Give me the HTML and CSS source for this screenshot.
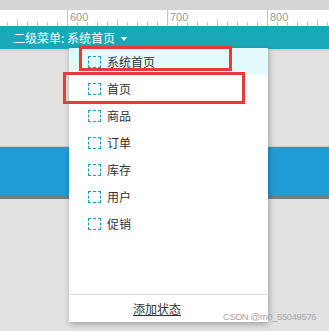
FILE: index.html
```html
<!DOCTYPE html>
<html lang="zh-CN">
<head>
<meta charset="UTF-8">
<meta name="viewport" content="width=device-width, initial-scale=1.0">
<title>二级菜单</title>
<link rel="stylesheet" href="styles.css">
</head>
<body>
    <div class="top-strip"></div>
    <div class="ruler">
        <span class="ruler-cell">600</span>
        <span class="ruler-cell">700</span>
        <span class="ruler-cell">800</span>
    </div>
    <div class="menu-bar">
        <span>二级菜单:&nbsp;系统首页</span>
        <span class="caret"></span>
    </div>
    <div class="canvas">
        <div class="canvas-gap"></div>
        <div class="blue-band"></div>
    </div>

    <div class="dropdown">
        <ul class="state-list">
            <li class="state-item active"><span class="check"></span>系统首页</li>
            <li class="state-item"><span class="check"></span>首页</li>
            <li class="state-item"><span class="check"></span>商品</li>
            <li class="state-item"><span class="check"></span>订单</li>
            <li class="state-item"><span class="check"></span>库存</li>
            <li class="state-item"><span class="check"></span>用户</li>
            <li class="state-item"><span class="check"></span>促销</li>
        </ul>
        <div class="dropdown-footer"><a class="add-state">添加状态</a></div>
    </div>

    <!-- annotation boxes -->
    <div class="mark mark-one"></div>
    <div class="mark mark-two"></div>

    <div class="watermark">CSDN @m0_55049576</div>
</body>
</html>
```

FILE: styles.css
```css
body {
    margin: 0;
    width: 329px;
    height: 331px;
    overflow: hidden;
    background-color: #e2e2e2;
    font-family: "Noto Sans CJK SC", "Liberation Sans", sans-serif;
    position: relative;
}

.top-strip {
    height: 10px;
    background-color: #d5d5d5;
}

.ruler {
    height: 16px;
    background-color: #fff;
    display: flex;
    padding-left: 67px;
    overflow: hidden;
    background-image:
        linear-gradient(to right, #c4c4c4 1px, transparent 1px),
        linear-gradient(to right, #c4c4c4 1px, transparent 1px);
    background-size: 10px 4px, 50px 7px;
    background-position: 7px 100%, 17px 100%;
    background-repeat: repeat-x;
}

.ruler-cell {
    flex: 0 0 100px;
    box-sizing: border-box;
    border-left: 1px solid #c4c4c4;
    padding-left: 2px;
    font-family: "Liberation Sans", sans-serif;
    font-size: 11px;
    line-height: 15px;
    color: #9a9a9a;
    background-color: #fff;
    background-image:
        linear-gradient(to right, #c4c4c4 1px, transparent 1px),
        linear-gradient(to right, #c4c4c4 1px, transparent 1px);
    background-size: 10px 4px, 50px 7px;
    background-position: 9px 100%, 49px 100%;
    background-repeat: repeat-x;
}

.menu-bar {
    height: 23px;
    background-color: #19a8b8;
    color: #fff;
    font-size: 12px;
    line-height: 23px;
    padding-left: 13px;
    display: flex;
    align-items: center;
}

.caret {
    margin-left: 6px;
    margin-top: 2px;
    border-left: 3.5px solid transparent;
    border-right: 3.5px solid transparent;
    border-top: 4px solid #fff;
}

.canvas {
    box-shadow: inset 0 3px 3px -2px rgba(0, 0, 0, 0.15);
}

.canvas-gap {
    height: 97px;
    border-bottom: 1px solid #c9c9c9;
}

.blue-band {
    height: 49px;
    background-color: #219dd5;
    border-bottom: 3px solid #6f7f86;
}

.dropdown {
    position: absolute;
    left: 69px;
    top: 48px;
    width: 199px;
    height: 274px;
    background-color: #fff;
    box-shadow: 1px 2px 6px rgba(0, 0, 0, 0.3);
    display: flex;
    flex-direction: column;
}

.state-list {
    list-style: none;
    margin: 0;
    padding: 0;
    flex: 1;
}

.state-item {
    height: 27px;
    display: flex;
    align-items: center;
    padding-left: 19px;
    font-size: 12px;
    color: #333;
}

.state-item.active {
    background-color: #e2fafa;
}

.check {
    width: 11px;
    height: 10px;
    border: 1px dashed #1a9cc4;
    margin-right: 6px;
}

.dropdown-footer {
    height: 27px;
    border-top: 1px solid #e0e0e0;
    padding-left: 64px;
    display: flex;
    align-items: center;
}

.add-state {
    font-size: 12px;
    color: #333;
    text-decoration: underline;
}

.mark {
    position: absolute;
    border: 3px solid #e8393e;
    box-sizing: border-box;
}

.mark-one {
    left: 79px;
    top: 46px;
    width: 153px;
    height: 25px;
}

.mark-two {
    left: 63px;
    top: 72px;
    width: 182px;
    height: 32px;
}

.watermark {
    position: absolute;
    left: 223px;
    top: 311px;
    width: 98px;
    overflow: hidden;
    white-space: nowrap;
    font-family: "Liberation Sans", sans-serif;
    font-size: 9.5px;
    letter-spacing: -0.4px;
    color: #a8a8a8;
}
```
